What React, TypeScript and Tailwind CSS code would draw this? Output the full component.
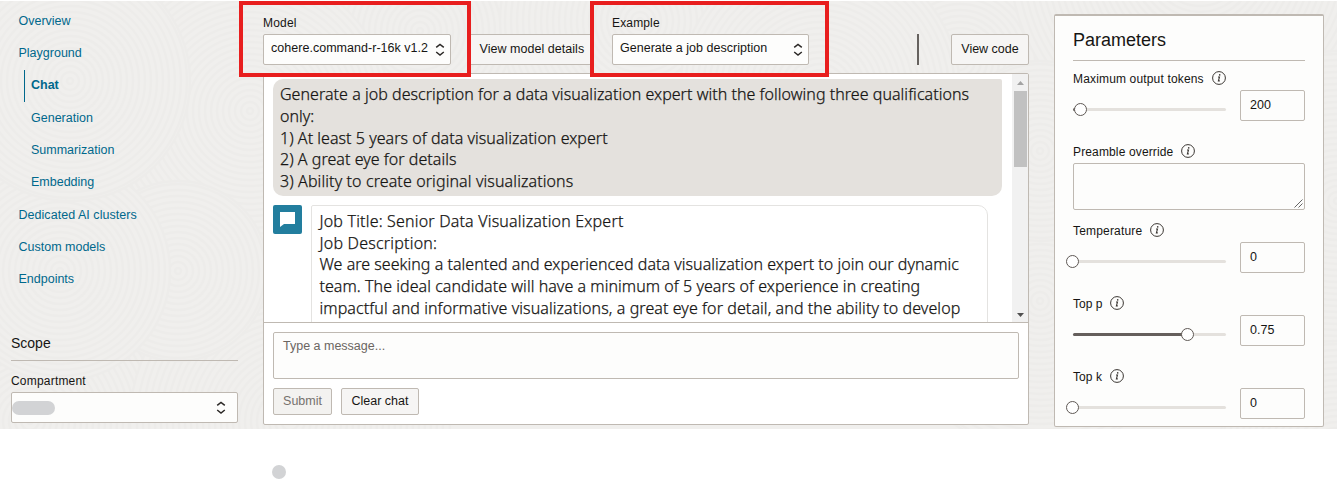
import type { ReactNode } from 'react';

const NAV = [
  { label: 'Overview', cls: 'pl-[18.5px]' },
  { label: 'Playground', cls: 'pl-[18.5px]' },
  { label: 'Chat', cls: 'font-bold ml-6 pl-[6px] border-l border-[#00688c]' },
  { label: 'Generation', cls: 'pl-[31px]' },
  { label: 'Summarization', cls: 'pl-[31px]' },
  { label: 'Embedding', cls: 'pl-[31px]' },
  { label: 'Dedicated AI clusters', cls: 'pl-[18.5px] tracking-[0.04px] pt-px' },
  { label: 'Custom models', cls: 'pl-[18.5px]' },
  { label: 'Endpoints', cls: 'pl-[18.5px]' },
];

const SWIRLS = [
  [420, 30, 170], [960, 60, 140], [1200, -40, 190], [250, 110, 140], [30, 420, 150], [640, 20, 140],
  [1040, 300, 150], [1337, 200, 150], [820, 90, 140], [1337, 460, 120], [290, 420, 160],
  [178, 270, 90], [60, 270, 110], [70, 80, 120], [1040, 150, 90],
];

function Backdrop() {
  return (
    <svg className="absolute inset-0 h-full w-full" aria-hidden="true">
      <rect width="100%" height="100%" fill="#f0efed" />
      {SWIRLS.map(([cx, cy, r], i) => (
        <g key={i} fill="none" stroke="#edecea" strokeWidth="2.4">
          <circle cx={cx} cy={cy} r={r} fill="#f0efed" />
          {Array.from({ length: Math.floor(r / 6) }, (_, k) => (
            <circle key={k} cx={cx} cy={cy} r={3 + k * 6} />
          ))}
        </g>
      ))}
    </svg>
  );
}

function UpDown({ className = '' }: { className?: string }) {
  return (
    <svg className={className} width="10" height="14" viewBox="0 0 10 14" fill="none" stroke="#2b2826" strokeWidth="1.5">
      <path d="M1.2 4.4 5 1.4 8.8 4.4M1.2 9 5 12 8.8 9" />
    </svg>
  );
}

function Info() {
  return (
    <svg width="14" height="14" viewBox="0 0 14 14" fill="none" stroke="#3a3632">
      <circle cx="7" cy="7" r="6.4" strokeWidth="1" />
      <path d="M6 6h1.5L6.4 9.9h1.4" strokeWidth="1.1" />
      <circle cx="7.7" cy="3.9" r=".8" fill="#3a3632" stroke="none" />
    </svg>
  );
}

function Slider({ fill, knob, value }: { fill: string; knob: string; value: string }) {
  return (
    <div className="flex h-[31px] items-center">
      <div className="relative mt-[7px] h-[3px] w-[153px] rounded-full bg-[#e4e1dd]">
        <div className={`h-full rounded-full bg-[#655f5c] ${fill}`} />
        <div className={`absolute -top-[5px] size-[13px] rounded-full border border-[#5f5955] bg-white ${knob}`} />
      </div>
      <div className="ml-[14px] h-[31px] w-[65px] rounded-xs border border-[#bfb9b2] pt-[5px] pl-[9px] text-[12.5px] leading-[19px]">{value}</div>
    </div>
  );
}

function Label({ children, className }: { children: ReactNode; className: string }) {
  return (
    <div className="flex h-[14px] items-center gap-[8px] text-[12px] leading-[14px]">
      <span className={`pt-[2px] ${className}`}>{children}</span>
      <Info />
    </div>
  );
}

export default function App() {
  return (
    <div className="h-[480px] w-[1337px] overflow-hidden bg-white pt-px font-['Liberation_Sans',Arial,sans-serif] text-[12.5px] text-[#161513]">
      <div className="relative h-[428px]">
        <Backdrop />
        <div className="relative flex h-full">
          <aside className="w-[263px] shrink-0">
            <nav className="flex flex-col pt-[4px] text-[#00688c]">
              {NAV.map((n) => (
                <a key={n.label} className={`flex h-[32.25px] items-center whitespace-nowrap ${n.cls}`}>{n.label}</a>
              ))}
            </nav>
            <div className="mt-[40px] ml-[11px] w-[227px]">
              <h2 className="h-[26px] border-b border-[#bfb9b2] text-[14px] leading-[16px]">Scope</h2>
              <div className="mt-[13px] text-[12px] leading-[14px] tracking-[0.2px]">Compartment</div>
              <div className="mt-[4px] flex h-[31px] items-center justify-between rounded-xs border border-[#bfb9b2] bg-[#fdfdfc] pr-[11px]">
                <span className="h-[14px] w-[43px] rounded-full bg-[#d2d3d5]" />
                <UpDown />
              </div>
            </div>
          </aside>

          <main className="w-[766px] shrink-0">
            <div className="flex h-[64px] items-end">
              <div className="w-[188px]">
                <div className="mb-[4px] text-[12px] leading-[14px] tracking-[0.2px]">Model</div>
                <div className="flex h-[31px] items-center rounded-xs border border-[#bfb9b2] bg-[#fdfdfc] pl-[7px]">
                  <span className="mb-[2px] w-[164px] tracking-[0.03px] whitespace-nowrap">cohere.command-r-16k v1.2</span>
                  <UpDown />
                </div>
              </div>
              <div className="ml-[17px] flex h-[31px] w-[125px] items-center rounded-xs border border-[#bfb9b2] bg-[#f6f5f4] pl-[10.5px] tracking-[0.04px] whitespace-nowrap">View model details</div>
              <div className="ml-[19px] w-[197px]">
                <div className="mb-[4px] text-[12px] leading-[14px] tracking-[0.15px]">Example</div>
                <div className="flex h-[31px] items-center rounded-xs border border-[#bfb9b2] bg-[#fdfdfc] pl-[7px]">
                  <span className="mb-[2px] w-[173px] tracking-[0.02px] whitespace-nowrap">Generate a job description</span>
                  <UpDown />
                </div>
              </div>
              <div className="ml-[108px] h-[31px] w-[2px] bg-[#66625f]" />
              <div className="ml-[32px] flex h-[31px] w-[78px] items-center justify-center rounded-xs border border-[#bfb9b2] bg-[#f6f5f4] whitespace-nowrap">View code</div>
            </div>

            <section className="mt-[8px] flex h-[352px] flex-col overflow-hidden rounded-xs border border-[#bfb9b2] bg-white">
              <div className="flex h-[249px] border-b border-[#bfb9b2] font-['Noto_Sans','Open_Sans',sans-serif] text-[16px] leading-[21.75px] font-light whitespace-nowrap [-webkit-text-stroke:0.25px_#161513]">
                <div className="w-[748px] overflow-hidden pt-[5px] pl-[9px]">
                  <div className="h-[117px] w-[729px] rounded-[10px] rounded-tr-[2px] bg-[#e4e1dd] pt-[5px] pl-[7px]">
                    <p className="tracking-[0.04px]">Generate a job description for a data visualization expert with the following three qualifications</p>
                    <p className="tracking-[0.02px]">only:</p>
                    <p className="tracking-[0.04px]">1) At least 5 years of data visualization expert</p>
                    <p className="tracking-[0.04px]">2) A great eye for details</p>
                    <p className="tracking-[0.11px]">3) Ability to create original visualizations</p>
                  </div>
                  <div className="mt-[9px] flex">
                    <div className="flex size-[29px] items-center justify-center rounded-[2px] bg-[#227e9e]">
                      <svg width="15" height="15" viewBox="0 0 15 15" fill="#fff"><path d="M0 0h15v12H4L0 15Z" /></svg>
                    </div>
                    <div className="ml-[9px] h-[200px] w-[677px] rounded-[10px] rounded-tl-[2px] border border-[#e4e3e1] pt-[4.8px] pl-[7.5px]">
                      <p className="tracking-[0.19px]">Job Title: Senior Data Visualization Expert</p>
                      <p className="tracking-[0.22px]">Job Description:</p>
                      <p className="tracking-[0.03px]">We are seeking a talented and experienced data visualization expert to join our dynamic</p>
                      <p className="tracking-[0.05px]">team. The ideal candidate will have a minimum of 5 years of experience in creating</p>
                      <p className="tracking-[0.085px]">impactful and informative visualizations, a great eye for detail, and the ability to develop</p>
                    </div>
                  </div>
                </div>
                <div className="flex w-[16px] flex-col items-center bg-[#f1f1f1] pt-[7px] pb-[5px]">
                  <svg width="7" height="4" viewBox="0 0 7 4" fill="#a3a3a3"><path d="M0 4 3.5 0 7 4Z" /></svg>
                  <div className="mt-[6px] h-[76px] w-[13px] bg-[#c1c1c1]" />
                  <svg className="mt-auto" width="7" height="4" viewBox="0 0 7 4" fill="#505050"><path d="M0 0 3.5 4 7 0Z" /></svg>
                </div>
              </div>
              <div className="px-[9px] pt-[9px]">
                <div className="h-[47px] rounded-xs border border-[#bfb9b2] bg-[#fdfdfc] pt-[5px] pl-[9px] leading-[16px] text-[#6b6662]">Type a message...</div>
                <div className="mt-[9px] flex gap-[9px]">
                  <div className="flex h-[27px] w-[59px] items-center justify-center rounded-xs border border-[#bfb9b2] bg-[#f3f2f0] text-[#76716d]">Submit</div>
                  <div className="flex h-[27px] w-[78px] items-center justify-center rounded-xs border border-[#bfb9b2] bg-[#f6f5f4] whitespace-nowrap">Clear chat</div>
                </div>
              </div>
            </section>
          </main>

          <section className="mt-[13px] ml-[25px] h-[413px] w-[270px] rounded-xs border border-t-2 border-[#bfb9b2] bg-[#fdfdfc] pl-[18px]">
            <h2 className="h-[45px] w-[232px] border-b border-[#bfb9b2] pt-[14px] text-[18px] leading-[20px]">Parameters</h2>
            <div className="mt-[10px]"><Label className="tracking-[0.16px]">Maximum output tokens</Label></div>
            <div className="mt-[5px]"><Slider value="200" fill="w-[5px]" knob="left-[1px]" /></div>
            <div className="mt-[23px]"><Label className="tracking-[0.14px]">Preamble override</Label></div>
            <div className="mt-[5px] flex h-[47px] w-[232px] items-end justify-end rounded-xs border border-[#bfb9b2] p-px">
              <svg width="9" height="9" viewBox="0 0 9 9" stroke="#555" strokeWidth=".9"><path d="M.5 8.5l8-8M4.5 8.5l4-4" /></svg>
            </div>
            <div className="mt-[13px]"><Label className="tracking-[0.18px]">Temperature</Label></div>
            <div className="mt-[5px]"><Slider value="0" fill="w-0" knob="-left-[6.6px]" /></div>
            <div className="mt-[23px]"><Label className="tracking-[0px]">Top p</Label></div>
            <div className="mt-[5px]"><Slider value="0.75" fill="w-[115px]" knob="left-[108px]" /></div>
            <div className="mt-[23px]"><Label className="tracking-[0.1px]">Top k</Label></div>
            <div className="mt-[5px]"><Slider value="0" fill="w-0" knob="-left-[6.6px]" /></div>
          </section>
        </div>
        <div className="absolute top-0 left-[239px] h-[76px] w-[232px] border-4 border-[#e81e1e]" />
        <div className="absolute top-0 left-[590px] h-[76px] w-[239px] border-4 border-[#e81e1e]" />
      </div>
      <div className="mt-[36px] ml-[272px] size-[14px] rounded-full bg-[#d2d3d5]" />
    </div>
  );
}
